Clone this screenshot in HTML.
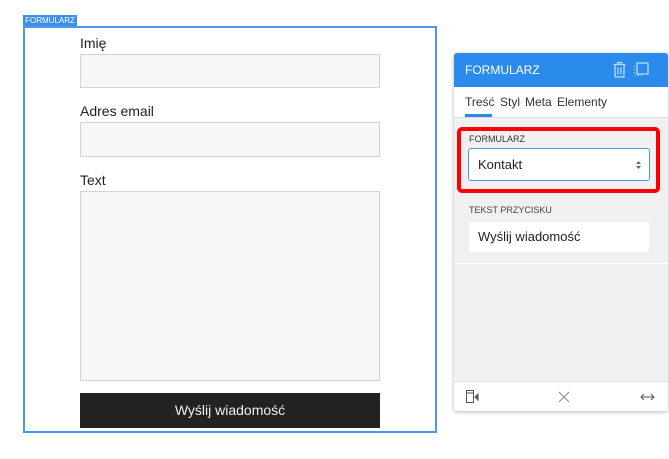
<!DOCTYPE html><html><head><style>
body{margin:0;width:669px;height:459px;background:#fff;font-family:"Liberation Sans",sans-serif;position:relative;overflow:hidden}
.a{position:absolute}
.lbl{font-size:14px;color:#222}
.inp{background:#f7f7f7;border:1px solid #d3d3d3;box-sizing:border-box}
</style></head><body>
<div class="a" style="left:23px;top:15px;width:54px;height:11px;background:#3b8fe8;color:#fff;font-size:8px;line-height:11px;text-align:center">FORMULARZ</div>
<div class="a" style="left:23px;top:26px;width:414px;height:407px;border:2px solid #4a98ea;box-sizing:border-box"></div>
<div class="a lbl" style="left:80px;top:35px">Imię</div>
<div class="a inp" style="left:80px;top:54px;width:300px;height:34px"></div>
<div class="a lbl" style="left:80px;top:103px">Adres email</div>
<div class="a inp" style="left:80px;top:122px;width:300px;height:35px"></div>
<div class="a lbl" style="left:80px;top:172px">Text</div>
<div class="a inp" style="left:80px;top:191px;width:300px;height:190px"></div>
<div class="a" style="left:80px;top:393px;width:300px;height:35px;background:#222;color:#eee;font-size:14px;line-height:35px;text-align:center">Wyślij wiadomość</div>

<div class="a" style="left:454px;top:53px;width:214px;height:358px;background:#f0f0f0;border-radius:3px;box-shadow:0 1px 4px rgba(0,0,0,.3);overflow:hidden">
 <div class="a" style="left:0;top:0;width:214px;height:34px;background:#2a8bec;color:#fff;font-size:12px;line-height:34px;text-indent:11px">FORMULARZ</div>
 <svg class="a" style="left:158px;top:8px" width="40" height="18" viewBox="0 0 40 18" fill="none" stroke="#bcd9fb" stroke-width="1.3"><path d="M1.5 3.5h12M5.5 3.5V1.5h4v2M3 4v12h9V4M6 6.5v7M9 6.5v7"/><path d="M25 2h11v11H25zM22.5 5v1M22.5 8v1M22.5 11v1M22.5 14.5h1M26 14.5h1M29 14.5h1"/></svg>
 <div class="a" style="left:0;top:34px;width:214px;height:30px;background:#fff;border-bottom:1px solid #ddd;font-size:12px;color:#333;line-height:30px"><span style="position:absolute;left:11px">Treść</span><span style="position:absolute;left:46px">Styl</span><span style="position:absolute;left:71px">Meta</span><span style="position:absolute;left:103px">Elementy</span><div class="a" style="left:11px;top:27px;width:27px;height:3px;background:#2a8bec"></div></div>
 <div class="a" style="left:3px;top:74px;width:203px;height:66px;border:4px solid #f00;border-radius:5px;box-sizing:border-box"></div>
 <div class="a" style="left:15px;top:81px;font-size:9px;color:#333">FORMULARZ</div>
 <div class="a" style="left:14px;top:95px;width:182px;height:33px;background:#fff;border:1px solid #4a98ea;border-radius:3px;box-sizing:border-box;font-size:13px;color:#222;line-height:31px;text-indent:9px">Kontakt<svg style="position:absolute;right:8px;top:12px" width="5" height="8" viewBox="0 0 5 8"><path d="M0 3L2.5 0 5 3zM0 5l2.5 3L5 5z" fill="#666"/></svg></div>
 <div class="a" style="left:15px;top:152px;font-size:9px;color:#444">TEKST PRZYCISKU</div>
 <div class="a" style="left:15px;top:169px;width:180px;height:30px;background:#fff;border-radius:2px;font-size:13px;color:#222;line-height:30px;text-indent:9px">Wyślij wiadomość</div>
 <div class="a" style="left:0;top:210px;width:214px;height:1px;background:#fff"></div>
 <div class="a" style="left:0;top:328px;width:214px;height:30px;background:#fff;border-top:1px solid #e0e0e0"></div>
 <svg class="a" style="left:10px;top:335px" width="200" height="18" viewBox="0 0 200 18" fill="none" stroke="#555" stroke-width="1"><rect x="2.5" y="2.5" width="7" height="12"/><path d="M2.5 5h7"/><path d="M14 6v6l-3-3z" fill="#555"/><path d="M95 4l10 10M105 4l-10 10" stroke="#888"/><path d="M177 9h13M180 6l-3 3 3 3M187 6l3 3-3 3"/></svg>
</div>
</body></html>
